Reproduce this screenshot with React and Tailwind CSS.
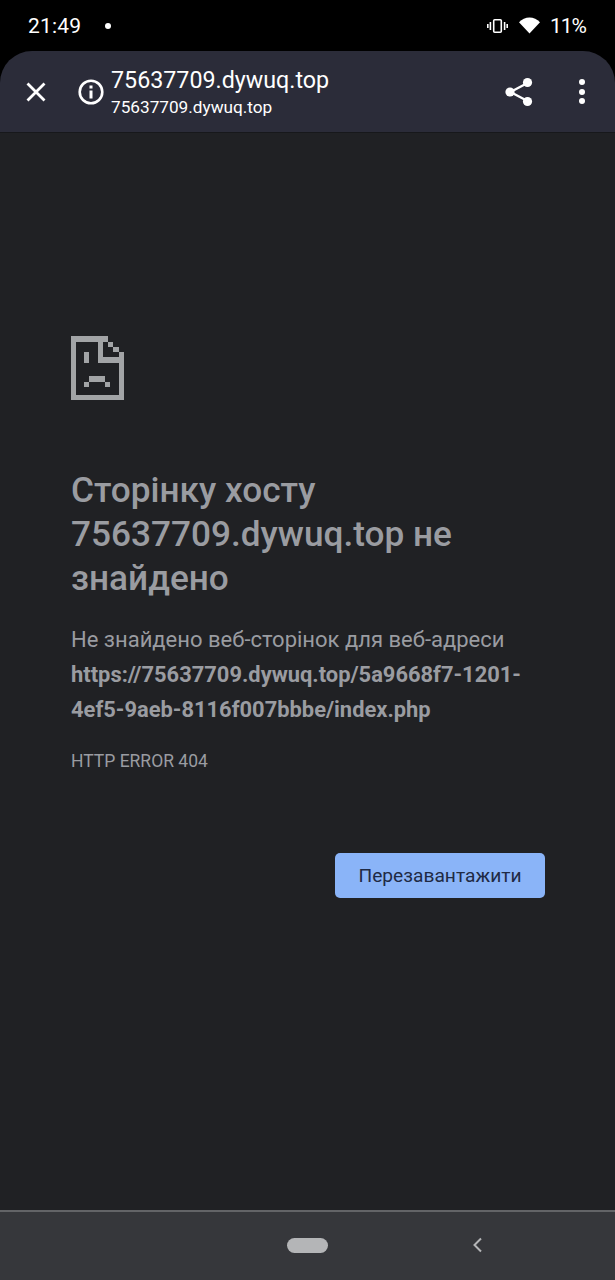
const F = { fontFamily: 'Roboto, sans-serif' };

function SadIcon() {
  const r = [
    [0,0,1,12],[0,0,7,1],[0,11,10,1],[9,3,1,9],[5,0,1,5],[5,4,4,1],
    [7,1,1,1],[8,2,1,1],
    [2.4,3,1,2],[3.4,7.6,3,1],[2.4,8.6,1,1],[6.4,8.6,1,1],
  ];
  return (
    <svg width="53" height="64" viewBox="0 0 10 12" className="block" shapeRendering="crispEdges">
      {r.map(([x,y,w,h],i)=><rect key={i} x={x} y={y} width={w} height={h} fill="#a2a4a6"/>)}
    </svg>
  );
}

export default function App() {
  return (
    <div className="w-[615px] h-[1280px] bg-black flex flex-col text-white overflow-hidden" style={F}>
      <div className="h-[51px] flex items-center pl-[28px] pr-[29px] shrink-0">
        <span className="text-[21px] leading-none tracking-[0.2px] mt-[1px]">21:49</span>
        <span className="w-[6px] h-[6px] rounded-full bg-white ml-[24px]"></span>
        <div className="ml-auto flex items-center">
          <svg width="21" height="14" viewBox="0 0 21 14" fill="none" className="mr-[11px]">
            <rect x="6.7" y="0.8" width="7.6" height="12.4" rx="1" stroke="white" strokeWidth="1.6"/>
            <path d="M3.4 3v8M17.6 3v8M0.8 5v4M20.2 5v4" stroke="white" strokeWidth="1.6"/>
          </svg>
          <svg width="21" height="17" viewBox="0 0 22 17" className="mr-[10px]"><path d="M11 17 0 5C3 2 7 0 11 0s8 2 11 5z" fill="white"/></svg>
          <span className="text-[21px] leading-none tracking-[-1px] mt-[1px]">11%</span>
        </div>
      </div>

      <div className="h-[82px] shrink-0 bg-[#2b2c39] rounded-t-[32px] border-b border-[#17181b] flex items-center relative">
        <svg width="22" height="22" viewBox="0 0 22 22" className="ml-[25px]" fill="none"><path d="M2.5 2.5l17 17M19.5 2.5l-17 17" stroke="white" strokeWidth="2.8"/></svg>
        <svg width="26" height="26" viewBox="0 0 26 26" className="ml-[31px]" fill="none">
          <circle cx="13" cy="13" r="11.3" stroke="white" strokeWidth="2.6"/>
          <rect x="11.5" y="11.5" width="3" height="8" fill="white"/>
          <rect x="11.5" y="6.5" width="3" height="3" fill="white"/>
        </svg>
        <div className="ml-[7px] flex flex-col mt-[2px]">
          <span className="text-[23.25px] leading-[27px]">75637709.dywuq.top</span>
          <span className="text-[17.2px] leading-[24px] pt-[1px]">75637709.dywuq.top</span>
        </div>
        <svg width="28" height="30" viewBox="0 0 28 30" className="ml-auto" fill="none">
          <path d="M22.5 6 5.5 15l17 9" stroke="white" strokeWidth="2.4"/>
          <circle cx="22.5" cy="5.5" r="4.6" fill="white"/><circle cx="5" cy="15" r="4.6" fill="white"/><circle cx="22.5" cy="24.5" r="4.6" fill="white"/>
        </svg>
        <div className="ml-[46px] mr-[30px] flex flex-col gap-[3.4px]">
          <span className="w-[6px] h-[6px] rounded-full bg-white"></span>
          <span className="w-[6px] h-[6px] rounded-full bg-white"></span>
          <span className="w-[6px] h-[6px] rounded-full bg-white"></span>
        </div>
      </div>

      <div className="flex-1 bg-[#202124] pl-[71px] pr-[70px] pt-[203px] flex flex-col">
        <SadIcon />
        <h1 className="mt-[68px] text-[35.2px] leading-[44px] font-medium text-[#9a9ca1]">Сторінку хосту 75637709.dywuq.top не знайдено</h1>
        <p className="mt-[22px] text-[22px] leading-[35px] text-[#9a9ca1]">
          Не знайдено веб-сторінок для веб-адреси <b className="font-bold block text-[21.9px]">https://75637709.dywuq.top/5a9668f7-1201-4ef5-9aeb-8116f007bbbe/index.php</b>
        </p>
        <p className="mt-[24px] text-[17.5px] leading-[20px] text-[#9a9ca1]">HTTP ERROR 404</p>
        <div className="mt-[82px] flex justify-end">
          <button className="w-[210px] h-[45px] rounded-[5px] bg-[#8ab4f8] text-[#1f2a44] text-[19.2px] leading-none">Перезавантажити</button>
        </div>
      </div>

      <div className="h-[70px] shrink-0 bg-[#36373b] border-t-2 border-[#636467] flex items-center">
        <span className="ml-[287px] w-[41px] h-[15px] rounded-full bg-[#b4b5b7] -mt-[2px]"></span>
        <svg width="12" height="16" viewBox="0 0 12 16" fill="none" className="ml-[143px] -mt-[2px]"><path d="M10 1.5 3.5 8l6.5 6.5" stroke="#b4b5b7" strokeWidth="2"/></svg>
      </div>
    </div>
  );
}
